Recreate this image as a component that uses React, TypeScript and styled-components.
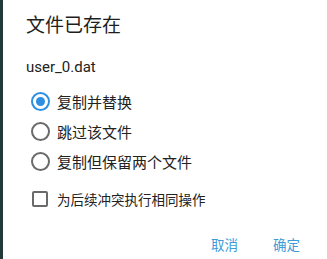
import {FC, useState} from 'react';
import styled, {createGlobalStyle} from 'styled-components';

const GlobalStyle = createGlobalStyle`
  html, body {
    margin: 0;
    padding: 0;
    background: #223a38;
    font-family: Roboto, "Noto Sans CJK SC", sans-serif;
  }
`;

const Screen = styled.div`
  display: flex;
  width: 327px;
  height: 259px;
  padding-left: 3px;
  box-sizing: border-box;
`;

const Dialog = styled.div`
  flex: 1;
  background: #ffffff;
  display: flex;
  flex-direction: column;
  padding: 13px 27px 0 23px;
`;

const Title = styled.div`
  font-size: 19px;
  line-height: 26px;
  color: #1e1e1e;
`;

const FileName = styled.div`
  margin-top: 18px;
  font-size: 15px;
  line-height: 20px;
  color: #222;
`;

const Options = styled.div`
  margin-top: 9px;
  display: flex;
  flex-direction: column;
`;

const Row = styled.label`
  display: flex;
  align-items: center;
  height: 30px;
  font-size: 15px;
  color: #222;
  cursor: pointer;
`;

const RadioRing = styled.span<{$on: boolean}>`
  box-sizing: border-box;
  width: 19px;
  height: 19px;
  margin: 0 7px 0 5px;
  border-radius: 50%;
  border: 2px solid ${p => (p.$on ? '#2e8fe0' : '#6a6a6a')};
  display: flex;
  align-items: center;
  justify-content: center;

  &::after {
    content: '';
    width: 9px;
    height: 9px;
    border-radius: 50%;
    background: ${p => (p.$on ? '#2e8fe0' : 'transparent')};
  }
`;

const CheckRow = styled(Row)`
  margin-top: 8px;
  font-size: 13.5px;
`;

const Box = styled.span`
  box-sizing: border-box;
  width: 16px;
  height: 16px;
  margin: 0 9px 0 6px;
  border: 2px solid #6a6a6a;
  border-radius: 2px;
`;

const Actions = styled.div`
  margin-top: 15px;
  display: flex;
  justify-content: flex-end;
  gap: 35px;
`;

const TextButton = styled.button`
  border: none;
  background: none;
  padding: 0;
  height: 30px;
  font-family: inherit;
  font-size: 13.5px;
  color: #3f9ad8;
`;

const choices = ['复制并替换', '跳过该文件', '复制但保留两个文件'];

const App: FC = () => {
  const [picked, setPicked] = useState(0);

  return (
    <>
      <GlobalStyle/>
      <Screen>
        <Dialog>
          <Title>文件已存在</Title>
          <FileName>user_0.dat</FileName>
          <Options>
            {choices.map((text, i) => (
              <Row key={text} onClick={() => setPicked(i)}>
                <RadioRing $on={picked === i}/>
                {text}
              </Row>
            ))}
          </Options>
          <CheckRow>
            <Box/>
            为后续冲突执行相同操作
          </CheckRow>
          <Actions>
            <TextButton>取消</TextButton>
            <TextButton>确定</TextButton>
          </Actions>
        </Dialog>
      </Screen>
    </>
  );
};

export default App;
